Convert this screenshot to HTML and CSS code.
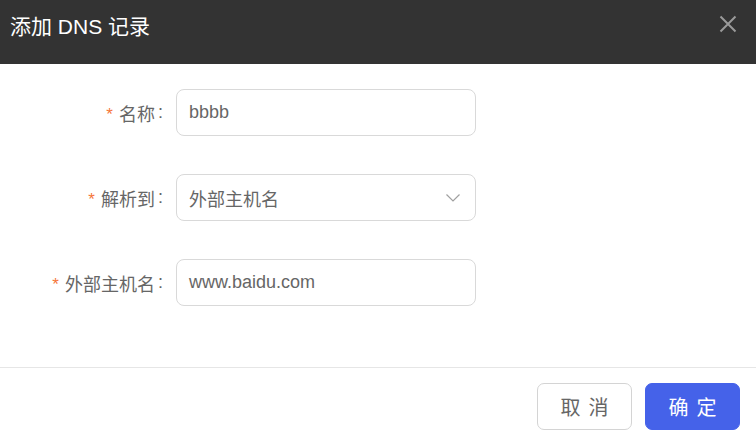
FILE: index.html
```html
<!DOCTYPE html>
<html lang="zh">
<head>
<meta charset="utf-8">
<link rel="stylesheet" href="styles.css">
</head>
<body>
<div class="dialog">
  <div class="header">
    <div class="title">添加 DNS 记录</div>
    <span class="close">
      <svg width="18" height="18" viewBox="0 0 18 18"><path d="M1.5 1.5 L16.5 16.5 M16.5 1.5 L1.5 16.5" stroke="#9a9a9a" stroke-width="2" fill="none"/></svg>
    </span>
  </div>
  <div class="body">
    <div class="row">
      <label class="label"><span class="req">*</span>名称<span class="colon">:</span></label>
      <div class="input">bbbb</div>
    </div>
    <div class="row">
      <label class="label"><span class="req">*</span>解析到<span class="colon">:</span></label>
      <div class="input select">外部主机名
        <svg class="chev" width="14" height="8" viewBox="0 0 14 8"><path d="M0.5 0.5 L7 7 L13.5 0.5" stroke="#a0a0a0" stroke-width="1.2" fill="none"/></svg>
      </div>
    </div>
    <div class="row">
      <label class="label"><span class="req">*</span>外部主机名<span class="colon">:</span></label>
      <div class="input">www.baidu.com</div>
    </div>
  </div>
  <div class="footer">
    <button class="btn cancel">取消</button>
    <button class="btn ok">确定</button>
  </div>
</div>
</body>
</html>
```
FILE: styles.css
```css
html, body { margin: 0; padding: 0; background: #fff; }
body { font-family: "Liberation Sans", "Noto Sans CJK SC", sans-serif; width: 756px; height: 438px; overflow: hidden; }
.dialog { display: flex; flex-direction: column; height: 438px; }
.header { height: 64px; background: #333333; display: flex; justify-content: space-between; align-items: flex-start; box-sizing: border-box; padding: 0 19px 0 10px; }
.title { color: #fff; font-size: 21px; line-height: 53px; }
.close { margin-top: 15px; display: flex; }
.body { padding-top: 25px; display: flex; flex-direction: column; gap: 38px; height: 303px; box-sizing: border-box; }
.row { display: flex; align-items: center; }
.label { width: 163px; text-align: right; font-size: 18px; color: #666; margin-right: 13px; display: flex; justify-content: flex-end; align-items: center; }
.colon { margin-left: 3px; }
.req { color: #f5763a; margin-right: 6px; font-size: 17px; position: relative; top: 2px; }
.input { width: 300px; height: 47px; box-sizing: border-box; border: 1px solid #d9d9d9; border-radius: 8px; padding: 0 12px; font-size: 18px; color: #666; display: flex; align-items: center; justify-content: space-between; }
.select { padding-right: 15px; }
.footer { border-top: 1px solid #e6e6e6; display: flex; justify-content: flex-end; gap: 13px; padding: 15px 16px 0 0; }
.btn { width: 95px; height: 47px; border-radius: 7px; font-size: 20px; letter-spacing: 8px; padding: 0 0 0 8px; font-family: "Liberation Sans", "Noto Sans CJK SC", sans-serif; cursor: pointer; }
.cancel { background: #fff; border: 1px solid #d4d4d4; color: #666; }
.ok { background: #4562e9; border: 1px solid #4562e9; color: #fff; }
```
